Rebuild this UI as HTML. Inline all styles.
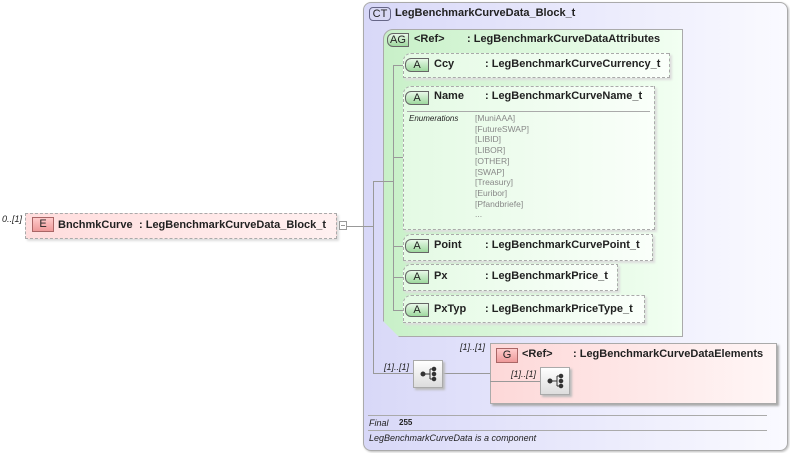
<!DOCTYPE html>
<html><head><meta charset="utf-8"><style>
*{margin:0;padding:0;box-sizing:border-box}
body{width:790px;height:453px;background:#fff;font-family:"Liberation Sans",sans-serif;position:relative;overflow:hidden;font-size:11px;color:#222}
.a{position:absolute}
.b{font-weight:bold}
.badge{position:absolute;height:14px;border:1px solid #666;font-size:11px;text-align:center;line-height:12px;color:#222}
.gbadge{background:linear-gradient(#e8f8e8,#9ed89e);border-radius:6px 0 0 6px}
.att{position:absolute;border:1px dashed #aaa;background:linear-gradient(90deg,#e4fae4,#fafffa);border-radius:8px 0 0 0;box-shadow:2px 2px 2px #ddd}
.ln{position:absolute;background:#999}
.i{font-style:italic;font-size:9px}
.seq{position:absolute;width:30px;height:28px;border:1px solid #aaa;background:linear-gradient(#fff,#ddd);box-shadow:2px 2px 2px #bbb}
</style></head><body>
<div class="a" style="left:363px;top:2px;width:425px;height:449px;border:1px solid #aaa;border-radius:8px;background:linear-gradient(90deg,#d8d8f8,#fafaff);box-shadow:1px 1px 2px #bbb"></div>
<div class="badge" style="left:369px;top:7px;width:22px;border-radius:4px;background:#d8d8f4;border-color:#668">CT</div>
<div class="a b" style="left:395px;top:7px">LegBenchmarkCurveData_Block_t</div>
<div class="a" style="left:383px;top:29px;width:300px;height:308px;border:1px solid #aaa;background:linear-gradient(90deg,#c8f0c8,#f2fff2);border-radius:10px 0 0 0;box-shadow:2px 2px 2px #aaa;clip-path:polygon(0 0,100% 0,100% 100%,16px 100%,0 calc(100% - 16px))"></div>
<div class="badge gbadge" style="left:387px;top:33px;width:22px">AG</div>
<div class="a b" style="left:414px;top:33px">&lt;Ref&gt;</div>
<div class="a b" style="left:467px;top:33px">: LegBenchmarkCurveDataAttributes</div>
<div class="ln" style="left:393px;top:65px;width:1px;height:246px"></div>
<div class="ln" style="left:393px;top:65px;width:12px;height:1px"></div>
<div class="ln" style="left:393px;top:157px;width:12px;height:1px"></div>
<div class="ln" style="left:393px;top:246px;width:12px;height:1px"></div>
<div class="ln" style="left:393px;top:277px;width:12px;height:1px"></div>
<div class="ln" style="left:393px;top:310px;width:12px;height:1px"></div>
<div class="ln" style="left:373px;top:181px;width:21px;height:1px"></div>
<div class="ln" style="left:373px;top:181px;width:1px;height:193px"></div>
<div class="ln" style="left:345px;top:226px;width:28px;height:1px"></div>
<div class="ln" style="left:373px;top:373px;width:40px;height:1px"></div>
<div class="ln" style="left:443px;top:373px;width:47px;height:1px"></div>
<div class="att" style="left:403px;top:53px;width:267px;height:25px"></div>
<div class="badge gbadge" style="left:405px;top:58px;width:24px">A</div>
<div class="a b" style="left:434px;top:58px">Ccy</div><div class="a b" style="left:485px;top:58px">: LegBenchmarkCurveCurrency_t</div>
<div class="att" style="left:403px;top:86px;width:252px;height:144px"></div>
<div class="badge gbadge" style="left:405px;top:91px;width:24px">A</div>
<div class="a b" style="left:434px;top:90px">Name</div><div class="a b" style="left:485px;top:90px">: LegBenchmarkCurveName_t</div>
<div class="ln" style="left:407px;top:111px;width:243px;height:1px;background:#aaa"></div>
<div class="a i" style="left:409px;top:114px;font-size:8px;color:#222">Enumerations</div>
<div class="a" style="left:475px;top:113px;font-size:8.5px;line-height:10.7px;color:#888">[MuniAAA]<br>[FutureSWAP]<br>[LIBID]<br>[LIBOR]<br>[OTHER]<br>[SWAP]<br>[Treasury]<br>[Euribor]<br>[Pfandbriefe]<br>...</div>
<div class="att" style="left:403px;top:234px;width:250px;height:27px"></div>
<div class="badge gbadge" style="left:405px;top:239px;width:24px">A</div>
<div class="a b" style="left:434px;top:239px">Point</div><div class="a b" style="left:485px;top:239px">: LegBenchmarkCurvePoint_t</div>
<div class="att" style="left:403px;top:264px;width:215px;height:27px"></div>
<div class="badge gbadge" style="left:405px;top:270px;width:24px">A</div>
<div class="a b" style="left:434px;top:270px">Px</div><div class="a b" style="left:485px;top:270px">: LegBenchmarkPrice_t</div>
<div class="att" style="left:403px;top:295px;width:242px;height:28px"></div>
<div class="badge gbadge" style="left:405px;top:303px;width:24px">A</div>
<div class="a b" style="left:434px;top:303px">PxTyp</div><div class="a b" style="left:485px;top:303px">: LegBenchmarkPriceType_t</div>
<div class="a i" style="left:384px;top:362px">[1]..[1]</div>
<div class="seq" style="left:413px;top:360px"><svg width="28" height="26"><g fill="#333" stroke="#333"><circle cx="9" cy="13" r="2"/><line x1="9" y1="13" x2="16" y2="13"/><line x1="16" y1="8" x2="16" y2="18"/><line x1="16" y1="8" x2="20" y2="8"/><line x1="16" y1="18" x2="20" y2="18"/><circle cx="20" cy="8" r="1.8"/><circle cx="20" cy="13" r="1.8"/><circle cx="20" cy="18" r="1.8"/></g></svg></div>
<div class="a i" style="left:460px;top:342px">[1]..[1]</div>
<div class="a" style="left:490px;top:343px;width:287px;height:61px;border:1px solid #aaa;background:linear-gradient(90deg,#fdd8d8,#fff6f6);box-shadow:2px 2px 2px #aaa"></div>
<div class="badge" style="left:496px;top:348px;width:22px;height:15px;background:linear-gradient(#fcc,#e99);border-color:#a66">G</div>
<div class="a b" style="left:522px;top:348px">&lt;Ref&gt;</div>
<div class="a b" style="left:573px;top:348px">: LegBenchmarkCurveDataElements</div>
<div class="ln" style="left:490px;top:381px;width:50px;height:1px"></div>
<div class="a i" style="left:511px;top:369px">[1]..[1]</div>
<div class="seq" style="left:540px;top:367px"><svg width="28" height="26"><g fill="#333" stroke="#333"><circle cx="9" cy="13" r="2"/><line x1="9" y1="13" x2="16" y2="13"/><line x1="16" y1="8" x2="16" y2="18"/><line x1="16" y1="8" x2="20" y2="8"/><line x1="16" y1="18" x2="20" y2="18"/><circle cx="20" cy="8" r="1.8"/><circle cx="20" cy="13" r="1.8"/><circle cx="20" cy="18" r="1.8"/></g></svg></div>
<div class="ln" style="left:368px;top:415px;width:399px;height:1px;background:#aaa"></div>
<div class="a i" style="left:369px;top:418px">Final</div>
<div class="a b" style="left:399px;top:418px;font-size:8px">255</div>
<div class="ln" style="left:368px;top:430px;width:399px;height:1px;background:#aaa"></div>
<div class="a i" style="left:369px;top:433px">LegBenchmarkCurveData is a component</div>
<div class="a i" style="left:2px;top:214px">0..[1]</div>
<div class="a" style="left:25px;top:213px;width:312px;height:26px;border:1px dashed #aaa;background:linear-gradient(90deg,#fdd,#fff0f0);box-shadow:2px 2px 2px #ddd"></div>
<div class="badge" style="left:32px;top:217px;width:22px;height:15px;background:linear-gradient(#fcc,#e99);border-color:#a66;line-height:13px">E</div>
<div class="a b" style="left:58px;top:219px">BnchmkCurve</div>
<div class="a b" style="left:139px;top:219px">: LegBenchmarkCurveData_Block_t</div>
<div class="a" style="left:339px;top:221px;width:8px;height:9px;border:1px solid #999;background:#fff"></div>
<div class="ln" style="left:341px;top:225px;width:4px;height:1px"></div>
</body></html>
